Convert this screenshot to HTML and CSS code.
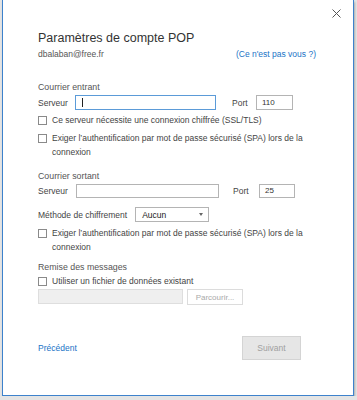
FILE: index.html
```html
<!DOCTYPE html>
<html lang="fr">
<head>
    <meta charset="UTF-8">
    <meta name="viewport" content="width=device-width, initial-scale=1.0">
    <title>Paramètres de compte POP</title>
    <link rel="stylesheet" href="styles.css">
</head>
<body>

    <div class="dialog">
        <!-- Bouton de fermeture -->
        <button class="close" aria-label="Fermer">
            <svg width="9" height="9" viewBox="0 0 9 9"><path d="M0.5 0.5L8.5 8.5M8.5 0.5L0.5 8.5" stroke="#555" stroke-width="1" fill="none"/></svg>
        </button>

        <h1 class="title">Paramètres de compte POP</h1>
        <div class="account">
            <span class="email">dbalaban@free.fr</span>
            <a class="link" href="#">(Ce n'est pas vous ?)</a>
        </div>

        <!-- Courrier entrant -->
        <h2 class="group-title first">Courrier entrant</h2>
        <div class="server-row">
            <label class="label">Serveur</label>
            <div class="field server in focused"><span class="caret"></span></div>
            <label class="label port-label">Port</label>
            <div class="field port">110</div>
        </div>
        <div class="check one">
            <span class="box"></span>
            <span class="check-text">Ce serveur nécessite une connexion chiffrée (SSL/TLS)</span>
        </div>
        <div class="check two">
            <span class="box"></span>
            <span class="check-text">Exiger l’authentification par mot de passe sécurisé (SPA) lors de la connexion</span>
        </div>

        <!-- Courrier sortant -->
        <h2 class="group-title second">Courrier sortant</h2>
        <div class="server-row out">
            <label class="label">Serveur</label>
            <div class="field server"></div>
            <label class="label port-label">Port</label>
            <div class="field port">25</div>
        </div>
        <div class="method-row">
            <label class="label">Méthode de chiffrement</label>
            <div class="select">
                <span>Aucun</span>
                <span class="arrow"></span>
            </div>
        </div>
        <div class="check three">
            <span class="box"></span>
            <span class="check-text">Exiger l’authentification par mot de passe sécurisé (SPA) lors de la connexion</span>
        </div>

        <!-- Remise des messages -->
        <h2 class="group-title third">Remise des messages</h2>
        <div class="check four">
            <span class="box"></span>
            <span class="check-text">Utiliser un fichier de données existant</span>
        </div>
        <div class="file-row">
            <div class="field file"></div>
            <button class="browse" disabled>Parcourir...</button>
        </div>

        <div class="footer">
            <a class="link back" href="#">Précédent</a>
            <button class="next" disabled>Suivant</button>
        </div>
    </div>

</body>
</html>
```

FILE: styles.css
```css
body {
    font-family: "Liberation Sans", Arial, sans-serif;
    margin: 0;
    padding: 0;
    background-color: #e4e4e4;
    color: #444;
    font-size: 8.5px;
}
.dialog {
    position: relative;
    box-sizing: border-box;
    width: 352px;
    height: 396px;
    margin-left: 2px;
    padding: 29px 36px 0 35px;
    background-color: #fff;
    border: 1px solid #3d82cc;
    border-top: none;
    box-shadow: 1px 2px 2px rgba(0, 0, 0, 0.25);
}
.close {
    position: absolute;
    top: 5px;
    right: 11px;
    width: 11px;
    height: 11px;
    padding: 1px;
    border: none;
    background: none;
}
.title {
    margin: 0;
    font-size: 12.5px;
    line-height: 18px;
    font-weight: normal;
    color: #333;
}
.account {
    display: flex;
    justify-content: space-between;
    line-height: 13px;
    margin-top: 1px;
    padding-right: 1px;
}
.email {
    color: #555;
}
.link {
    color: #1a73c6;
    text-decoration: none;
}
.group-title {
    margin: 0;
    font-size: 8.8px;
    line-height: 14px;
    font-weight: normal;
    color: #555;
}
.group-title.first {
    margin-top: 19px;
}
.group-title.second {
    margin-top: 10px;
}
.group-title.third {
    margin-top: 6px;
}
.server-row {
    display: grid;
    grid-template-columns: 37px 141px 16px 24px 37px;
    align-items: center;
    margin-top: 1px;
    height: 15px;
}
.server-row .port-label {
    grid-column: 4;
}
.server-row.out {
    grid-template-columns: 38px 143px 14px 26px 36px;
    height: 14px;
}
.server-row.out .field {
    height: 14px;
    line-height: 12px;
}
.label {
    line-height: 14px;
}
.field {
    box-sizing: border-box;
    height: 15px;
    border: 1px solid #b4b4b4;
    background: #fff;
    padding: 0 5px;
    line-height: 13px;
    font-size: 8px;
    color: #333;
}
.field.focused {
    border-color: #5b9bd8;
}
.caret {
    display: block;
    width: 1px;
    height: 9px;
    margin: 2px 0 0 1px;
    background: #222;
}
.check {
    display: flex;
    align-items: flex-start;
    gap: 5px;
    line-height: 14px;
}
.check.one {
    margin-top: 3px;
}
.check.two,
.check.three {
    margin-top: 4px;
}
.box {
    flex: none;
    box-sizing: border-box;
    width: 9px;
    height: 9px;
    margin-top: 3px;
    border: 1px solid #8a8a8a;
    background: #fff;
}
.check-text {
    max-width: 262px;
}
.method-row {
    display: flex;
    align-items: center;
    gap: 8px;
    margin-top: 9px;
}
.select {
    box-sizing: border-box;
    display: flex;
    align-items: center;
    justify-content: space-between;
    width: 74px;
    height: 15px;
    padding: 0 5px 0 6px;
    border: 1px solid #b4b4b4;
    color: #222;
}
.arrow {
    width: 0;
    height: 0;
    border-left: 2.5px solid transparent;
    border-right: 2.5px solid transparent;
    border-top: 3px solid #666;
}
.file-row {
    display: flex;
    gap: 4px;
    margin-top: 1px;
}
.field.file {
    width: 145px;
    background: #efefef;
    border-color: #dedede;
}
.browse {
    box-sizing: border-box;
    width: 56px;
    height: 16px;
    padding: 0;
    border: 1px solid #dcdcdc;
    background: #fff;
    color: #aaa;
    font-family: inherit;
    font-size: 8px;
}
.footer {
    display: flex;
    justify-content: space-between;
    align-items: center;
    margin-top: 31px;
    padding-right: 16px;
}
.next {
    box-sizing: border-box;
    width: 59px;
    height: 24px;
    border: 1px solid #d4d4d4;
    background: #e6e6e6;
    color: #a0a0a0;
    font-family: inherit;
    font-size: 8.5px;
}
```
